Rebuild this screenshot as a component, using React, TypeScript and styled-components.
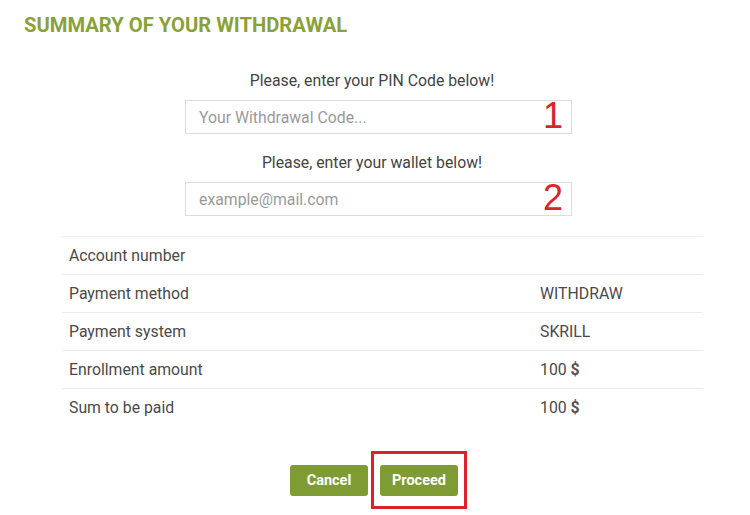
import React from 'react'
import styled, { createGlobalStyle } from 'styled-components'

const GlobalStyle = createGlobalStyle`
    body {
        margin: 0;
        background: #fff;
        font-family: Roboto, "Liberation Sans", sans-serif;
    }
`

const rows = [
    { label: 'Account number', value: '' },
    { label: 'Payment method', value: 'WITHDRAW' },
    { label: 'Payment system', value: 'SKRILL' },
    { label: 'Enrollment amount', value: '100', currency: true },
    { label: 'Sum to be paid', value: '100', currency: true },
]

export default function App() {
    return (
        <>
            <GlobalStyle />
            <Page>
                <Title>SUMMARY OF YOUR WITHDRAWAL</Title>
                <Form>
                    <Label>Please, enter your PIN Code below!</Label>
                    <Field>
                        <Input placeholder='Your Withdrawal Code...' />
                        <Marker>1</Marker>
                    </Field>
                    <Label>Please, enter your wallet below!</Label>
                    <Field>
                        <Input placeholder='example@mail.com' />
                        <Marker>2</Marker>
                    </Field>
                </Form>
                <Table>
                    {rows.map((r) => (
                        <Row key={r.label}>
                            <Cell>{r.label}</Cell>
                            <Value>
                                {r.value}
                                {r.currency && <Dollar> $</Dollar>}
                            </Value>
                        </Row>
                    ))}
                </Table>
                <Buttons>
                    <Button>Cancel</Button>
                    <Highlight>
                        <Button>Proceed</Button>
                    </Highlight>
                </Buttons>
            </Page>
        </>
    )
}

const Page = styled.div`
    display: flex;
    flex-direction: column;
    width: 750px;
    height: 515px;
    overflow: hidden;
`

const Title = styled.h1`
    margin: 13px 0 0 24px;
    font-weight: 700;
    font-size: 20.2px;
    line-height: 24px;
    color: #8aa13a;
`

const Form = styled.div`
    display: flex;
    flex-direction: column;
    align-items: center;
    padding-left: 7px;
    margin-top: 35px;
`

const Label = styled.div`
    font-size: 15.8px;
    line-height: 18px;
    color: #444;
    margin-bottom: 10px;
    margin-right: 13px;
`

const Field = styled.div`
    position: relative;
    width: 387px;
    height: 34px;
    margin-bottom: 20px;
`

const Input = styled.input`
    box-sizing: border-box;
    width: 100%;
    height: 100%;
    border: 1px solid #dcdcdc;
    padding: 0 13px;
    font-family: Roboto, "Liberation Sans", sans-serif;
    font-size: 15.8px;
    color: #444;
    outline: none;

    &::placeholder {
        color: #9a9a9a;
    }
`

const Marker = styled.span`
    position: absolute;
    right: 9px;
    top: -1px;
    font-family: "Liberation Sans", Arial, sans-serif;
    font-size: 36px;
    line-height: 34px;
    color: #d9232d;
`

const Table = styled.div`
    margin: 0 0 0 62px;
    width: 641px;
`

const Row = styled.div`
    display: grid;
    grid-template-columns: 478px 1fr;
    align-items: center;
    height: 37px;
    border-top: 1px solid #ebebeb;

    &:first-child {
        border-top-color: #f0f0f0;
    }
`

const Cell = styled.div`
    padding-left: 7px;
    font-size: 15.8px;
    color: #4a4a4a;
`

const Value = styled(Cell)`
    padding-left: 0;
`

const Dollar = styled.b`
    font-weight: 700;
    color: #555;
`

const Buttons = styled.div`
    display: flex;
    justify-content: center;
    align-items: center;
    gap: 3px;
    margin-top: 25px;
    padding-left: 7px;
`

const Highlight = styled.div`
    padding: 11px 6px 10px;
    border: 3px solid #d8232a;
`

const Button = styled.button`
    width: 78px;
    height: 31px;
    border: none;
    border-radius: 3px;
    background: #7f9b34;
    color: #fff;
    font-family: Roboto, "Liberation Sans", sans-serif;
    font-weight: 700;
    font-size: 14.5px;
    cursor: pointer;
`
